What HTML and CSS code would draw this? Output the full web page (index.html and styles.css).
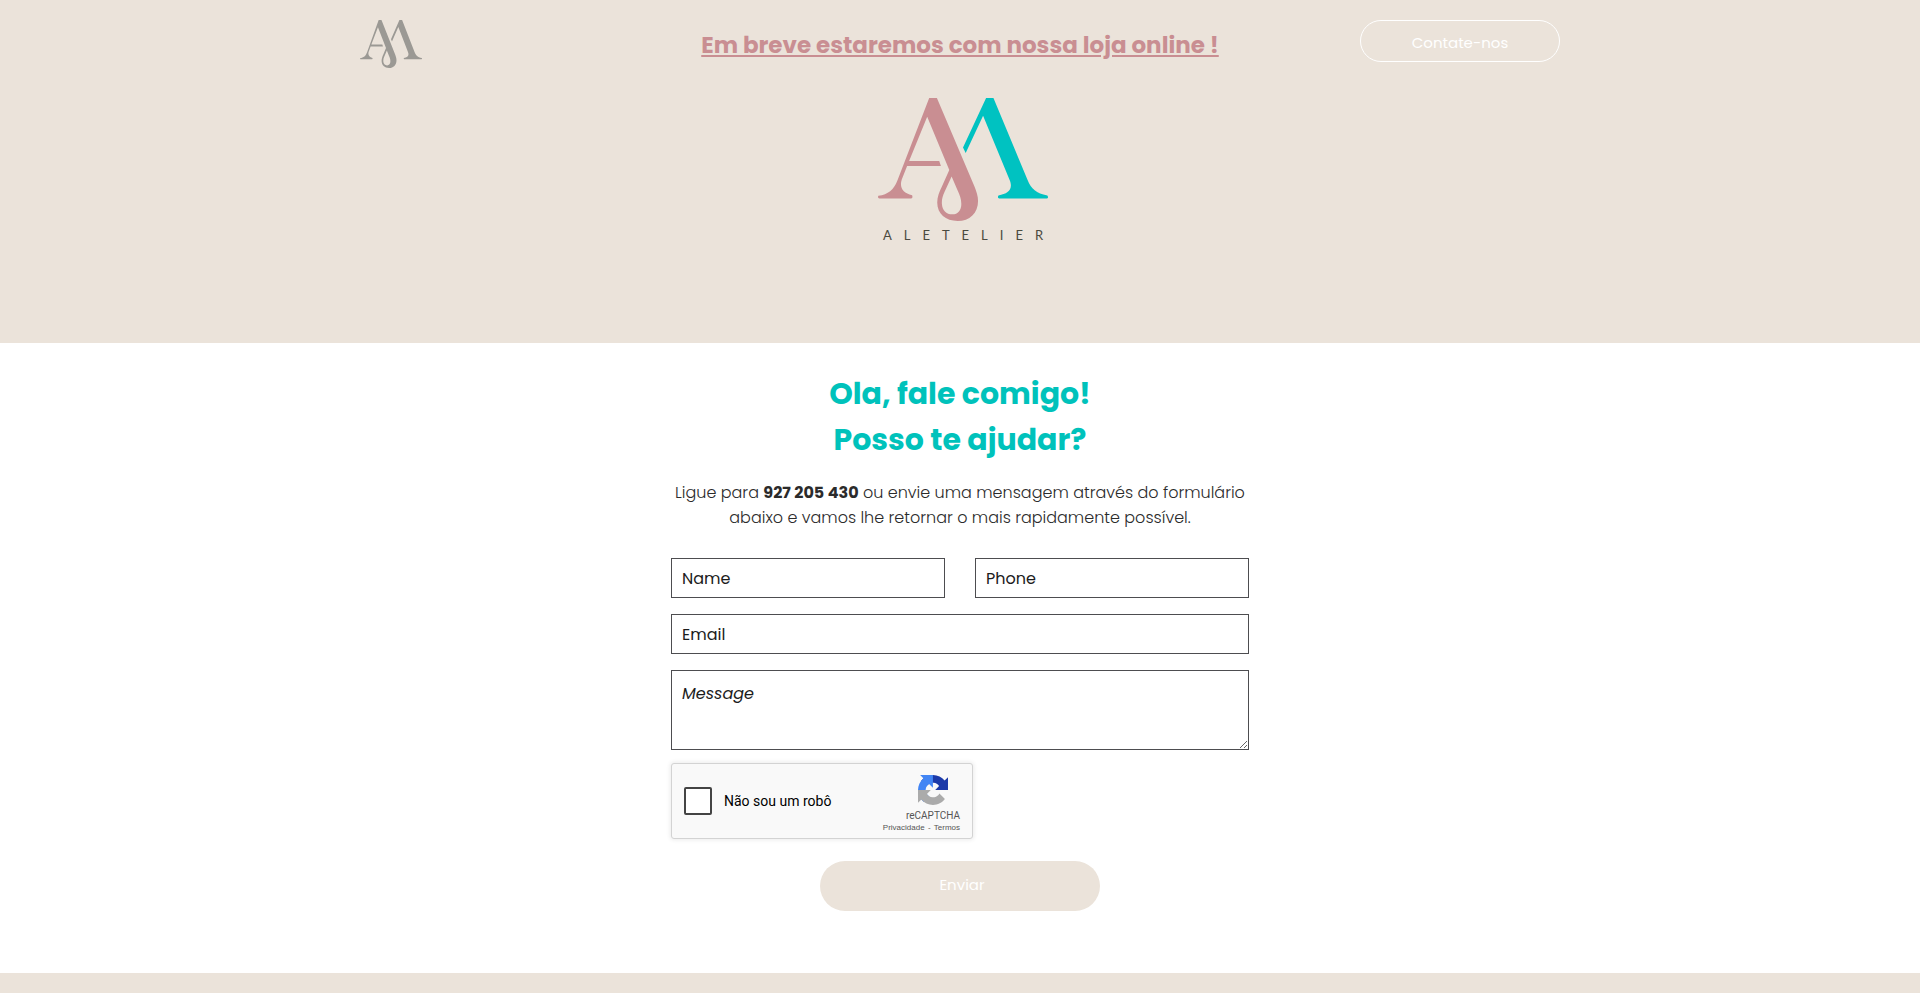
FILE: index.html
```html
<!DOCTYPE html>
<html lang="pt">
<head>
    <meta charset="UTF-8">
    <meta name="viewport" content="width=device-width, initial-scale=1.0">
    <title>Aletelier</title>
    <link rel="stylesheet" href="styles.css">
</head>
<body>
    <!-- AM monogram, shared by the nav bar and the hero -->
    <svg class="sprite" aria-hidden="true">
        <symbol id="monogram" viewBox="56 55 508 367" preserveAspectRatio="none">
            <path d="M209 55H232L344 318C350 333 355 347 355 362C355 398 330 422 294 422C258 422 233 401 233 367C233 350 239 336 247 319L269 270L203 111L149 243H239L244 258H143L127 298C119 322 131 340 158 345Q161 354 155 355H60Q54 353 57 347C87 342 102 330 114 301ZM276 289L255 335C249 348 246 359 247 371C248 390 260 402 278 402C295 402 305 390 305 371C305 356 300 345 294 331Z" fill-rule="evenodd"/>
            <path fill="currentColor" d="M379 55H401L503 300C514 327 529 340 562 346Q567 353 560 355H418Q412 353 416 346C446 341 461 327 449 299L370 108L318 219L310 203Z"/>
        </symbol>
    </svg>

    <header class="hero">
        <nav class="navbar">
            <a href="#" class="nav-logo" aria-label="Aletelier">
                <svg class="nav-mark"><use href="#monogram"/></svg>
            </a>
            <h2 class="announcement">Em breve estaremos com nossa loja online !</h2>
            <a href="#contact" class="nav-btn">Contate-nos</a>
        </nav>
        <div class="brand">
            <svg class="brand-mark" aria-hidden="true"><use href="#monogram"/></svg>
            <span class="brand-name">ALETELIER</span>
        </div>
    </header>

    <main class="contact" id="contact">
        <h1 class="contact-title">Ola, fale comigo!<br>Posso te ajudar?</h1>
        <p class="contact-text">Ligue para <strong>927 205 430</strong> ou envie uma mensagem através do formulário abaixo e vamos lhe retornar o mais rapidamente possível.</p>

        <form class="contact-form">
            <div class="form-row">
                <input class="field" type="text" name="name" placeholder="Name" aria-label="Name">
                <input class="field" type="tel" name="phone" placeholder="Phone" aria-label="Phone">
            </div>
            <input class="field" type="email" name="email" placeholder="Email" aria-label="Email">
            <textarea class="field message" name="message" placeholder="Message" aria-label="Message"></textarea>

            <div class="captcha">
                <input class="captcha-check" type="checkbox" id="robot">
                <label class="captcha-label" for="robot">Não sou um robô</label>
                <div class="captcha-info">
                    <svg class="captcha-logo" viewBox="0 0 64 64" aria-hidden="true">
                        <path fill="#1c3aa9" d="M64 31.955l-.033-1.37V4.687l-7.16 7.16C50.948 4.674 42.033.093 32.05.093c-10.4 0-19.622 4.96-25.458 12.64l11.736 11.86a15.55 15.55 0 0 1 4.754-5.334c2.05-1.6 4.952-2.906 8.968-2.906.485 0 .86.057 1.135.163 4.976.393 9.288 3.14 11.828 7.124l-8.307 8.307L64 31.953"/>
                        <path fill="#4285f4" d="M31.862.094l-1.37.033H4.594l7.16 7.16C4.58 13.147 0 22.06 0 32.046c0 10.4 4.96 19.622 12.64 25.458L24.5 45.768a15.55 15.55 0 0 1-5.334-4.754c-1.6-2.05-2.906-4.952-2.906-8.968 0-.485.057-.86.163-1.135.393-4.976 3.14-9.288 7.124-11.828l8.307 8.307L31.86.095"/>
                        <path fill="#ababab" d="M.001 32.045l.033 1.37v25.898l7.16-7.16c5.86 7.173 14.774 11.754 24.76 11.754 10.4 0 19.622-4.96 25.458-12.64l-11.736-11.86a15.55 15.55 0 0 1-4.754 5.334c-2.05 1.6-4.952 2.906-8.968 2.906-.485 0-.86-.057-1.135-.163-4.976-.393-9.288-3.14-11.828-7.124l8.307-8.307c-10.522.04-22.4.066-27.295-.005"/>
                    </svg>
                    <span class="captcha-name">reCAPTCHA</span>
                    <span class="captcha-links"><a href="#">Privacidade</a> - <a href="#">Termos</a></span>
                </div>
            </div>

            <button class="send-btn" type="submit">Enviar</button>
        </form>
    </main>

    <footer class="footer"></footer>
</body>
</html>
```

FILE: styles.css
```css
* {
    box-sizing: border-box;
}

body {
    margin: 0;
    min-height: 100vh;
    display: flex;
    flex-direction: column;
    font-family: Poppins, Inter, sans-serif;
    font-size: 16px;
    color: #2b2b2b;
    background-color: #fff;
}

.sprite {
    position: absolute;
    width: 0;
    height: 0;
}

/* Hero */
.hero {
    padding: 20px 20px 100px;
    background-color: #ebe3da;
}

.navbar {
    max-width: 1200px;
    margin: 0 auto;
    display: grid;
    grid-template-columns: 1fr auto 1fr;
    align-items: start;
}

.nav-logo {
    color: #9b9994;
    height: 48px;
}

.nav-mark {
    display: block;
    width: 62px;
    height: 48px;
    fill: currentColor;
}

.announcement {
    margin: 7px 0 0;
    font-size: 23px;
    line-height: 36px;
    font-weight: 700;
    color: #c98e92;
    text-decoration: underline;
}

.nav-btn {
    justify-self: end;
    width: 200px;
    height: 42px;
    border: 1px solid #fff;
    border-radius: 21px;
    font-size: 15px;
    line-height: 44px;
    text-align: center;
    text-decoration: none;
    color: #fff;
}

.brand {
    margin-top: 30px;
    padding-left: 6px;
    display: flex;
    flex-direction: column;
    align-items: center;
}

.brand-mark {
    width: 170px;
    height: 123px;
    fill: #c98e92;
    color: #00c2c1;
}

.brand-name {
    margin-top: 6px;
    padding-left: 12px;
    font-family: Lato, sans-serif;
    font-size: 13px;
    line-height: 16px;
    letter-spacing: 12px;
    color: #4a4a40;
}

/* Contact form */
.contact {
    width: 100%;
    max-width: 618px;
    margin: 0 auto;
    padding: 28px 20px 62px;
}

.contact-title {
    margin: 0;
    font-size: 30px;
    line-height: 46px;
    font-weight: 700;
    text-align: center;
    color: #00c2bb;
}

.contact-text {
    margin: 17px 0 28px;
    font-weight: 300;
    line-height: 25px;
    text-align: center;
}

.contact-text strong {
    font-weight: 700;
}

.contact-form {
    display: flex;
    flex-direction: column;
    gap: 16px;
}

.form-row {
    display: flex;
    gap: 30px;
}

.field {
    display: block;
    width: 100%;
    height: 40px;
    padding: 0 10px;
    border: 1px solid #4d4d50;
    border-radius: 0;
    background-color: #fff;
    font-family: inherit;
    font-size: 16px;
    color: #1c1c1c;
}

.field::placeholder {
    color: #1c1c1c;
    opacity: 1;
}

.message {
    height: 80px;
    padding: 11px 10px;
    line-height: 24px;
    resize: vertical;
}

.message::placeholder {
    font-style: italic;
}

.captcha {
    width: 302px;
    height: 76px;
    margin-top: -3px;
    padding: 0 12px;
    display: flex;
    align-items: center;
    border: 1px solid #d3d3d3;
    border-radius: 3px;
    background-color: #f9f9f9;
    box-shadow: 0 0 4px 1px rgba(0, 0, 0, 0.08);
    font-family: Roboto, sans-serif;
}

.captcha-check {
    appearance: none;
    width: 28px;
    height: 28px;
    margin: 0 12px 0 0;
    border: 2px solid #444;
    border-radius: 2px;
    background-color: #fff;
    cursor: pointer;
}

.captcha-check:checked {
    background-color: #4285f4;
}

.captcha-label {
    font-size: 14px;
    color: #000;
}

.captcha-info {
    margin: 5px 0 0 auto;
    display: flex;
    flex-direction: column;
    align-items: flex-end;
    color: #555;
}

.captcha-logo {
    width: 30px;
    height: 30px;
    margin-right: 12px;
}

.captcha-name {
    margin-top: 4px;
    font-size: 10px;
    line-height: 14px;
}

.captcha-links {
    font-family: "Liberation Sans", Arial, sans-serif;
    font-size: 8px;
    line-height: 10px;
}

.captcha-links a {
    margin: 0 1px;
    color: inherit;
    text-decoration: none;
}

.captcha-links a:last-child {
    margin-right: 0;
}

.send-btn {
    align-self: center;
    width: 280px;
    height: 50px;
    margin-top: 6px;
    padding: 0 0 3px 4px;
    border: none;
    border-radius: 25px;
    background-color: #ebe3da;
    font-family: inherit;
    font-size: 15px;
    color: #fff;
    cursor: pointer;
}

.footer {
    flex: 1;
    min-height: 20px;
    background-color: #ebe3da;
}

@media (max-width: 768px) {
    .navbar {
        grid-template-columns: 1fr;
        justify-items: center;
        gap: 16px;
        text-align: center;
    }

    .nav-btn {
        justify-self: center;
    }
}
```
